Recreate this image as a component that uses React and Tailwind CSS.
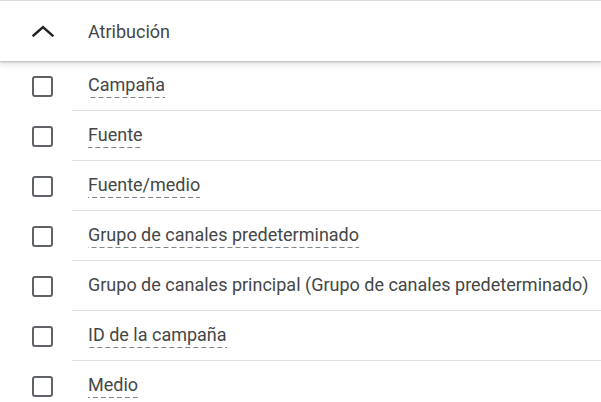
const fields = [
  { label: "Campaña", dashed: true },
  { label: "Fuente", dashed: true },
  { label: "Fuente/medio", dashed: true },
  { label: "Grupo de canales predeterminado", dashed: true },
  { label: "Grupo de canales principal (Grupo de canales predeterminado)", dashed: false },
  { label: "ID de la campaña", dashed: true },
  { label: "Medio", dashed: true },
];

function FieldRow({ label, dashed }) {
  return (
    <div className="flex h-[50px]">
      <div className="w-[72px] shrink-0 flex items-center pl-[32px]">
        <div className="w-[21px] h-[21px] rounded-[3px] border-2 border-[#5f6368] bg-white" />
      </div>
      <div className="flex-1 flex items-center pl-4 border-b border-[#e0e0e0]">
        <span
          className={
            dashed
              ? "mt-[1px] pb-[2px] leading-[22px] bg-[linear-gradient(to_right,#80868b_62%,transparent_0)] bg-[length:8px_1.5px] bg-repeat-x bg-bottom"
              : "mt-[1px] pb-[2px] leading-[22px]"
          }
        >
          {label}
        </span>
      </div>
    </div>
  );
}

export default function App() {
  return (
    <div className="w-[601px] h-[402px] overflow-hidden bg-white text-[18px] text-[#444746] font-['Roboto',sans-serif]">
      {/* Section header */}
      <div className="relative z-10 h-[61px] flex items-center border-t border-[#dadce0] bg-white shadow-[0_1px_2px_rgba(60,64,67,0.3),0_2px_6px_2px_rgba(60,64,67,0.12)]">
        <div className="w-[72px] shrink-0 flex items-center pl-[32px]">
          <svg width="22" height="12" viewBox="0 0 22 12" fill="none">
            <polyline
              points="1.5,10.5 11,2 20.5,10.5"
              stroke="#202124"
              strokeWidth="2.4"
              strokeLinecap="square"
            />
          </svg>
        </div>
        <span className="pl-4">Atribución</span>
      </div>

      {/* Attribution fields */}
      <div>
        {fields.map((f) => (
          <FieldRow key={f.label} label={f.label} dashed={f.dashed} />
        ))}
      </div>
    </div>
  );
}
